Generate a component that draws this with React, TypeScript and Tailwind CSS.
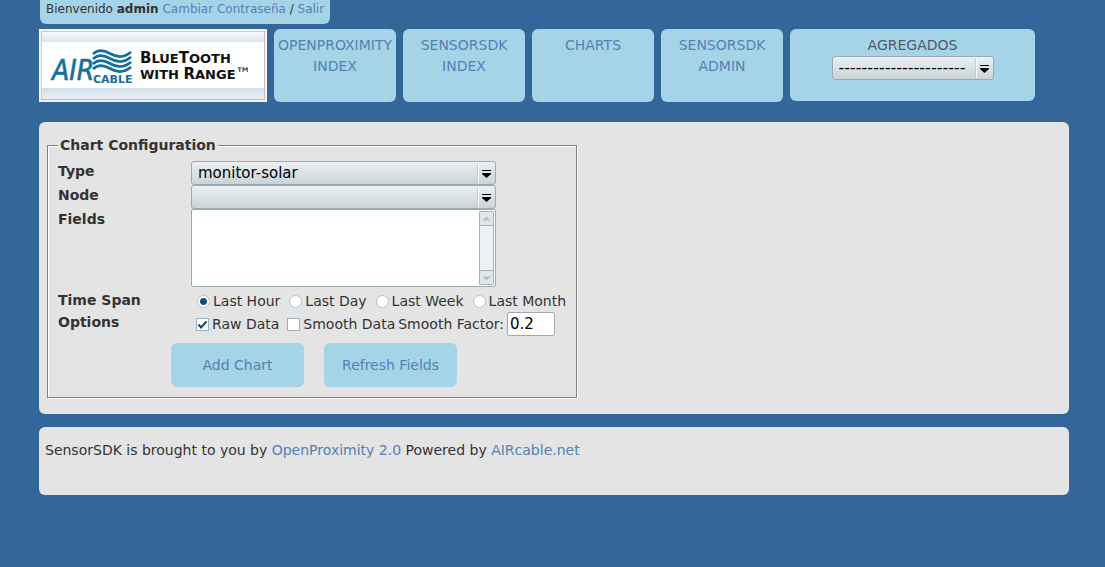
import { useState } from "react";
import type { ReactNode, SelectHTMLAttributes } from "react";

const NAV_ITEMS = [
  { label: "OPENPROXIMITY INDEX", href: "#openproximity" },
  { label: "SENSORSDK INDEX", href: "#sensorsdk" },
  { label: "CHARTS", href: "#charts" },
  { label: "SENSORSDK ADMIN", href: "#admin" },
];

const TIME_SPANS = ["Last Hour", "Last Day", "Last Week", "Last Month"];

function Logo() {
  return (
    <svg
      viewBox="0 0 228 73"
      className="block h-[73px] w-[228px]"
      role="img"
      aria-label="AIRcable, BlueTooth with Range"
    >
      <defs>
        <linearGradient id="bandTop" x1="0" y1="0" x2="0" y2="1">
          <stop offset="0" stopColor="#f8fafc" />
          <stop offset="1" stopColor="#d9e6f0" />
        </linearGradient>
        <linearGradient id="bandBottom" x1="0" y1="0" x2="0" y2="1">
          <stop offset="0" stopColor="#cfe0eb" />
          <stop offset="1" stopColor="#e9f0f5" />
        </linearGradient>
      </defs>
      <rect width="228" height="73" fill="#f4f4f4" />
      <rect x="2.5" y="2.5" width="223" height="68" fill="#fff" stroke="#d0cbc8" />
      <rect x="3" y="3" width="222" height="10" fill="url(#bandTop)" />
      <rect x="3" y="59" width="222" height="11" fill="url(#bandBottom)" />
      <path d="M3 70.5H225.500V3" fill="none" stroke="#c3bab5" />
      <text
        x="13"
        y="51"
        fill="#14709f"
        stroke="#14709f"
        strokeWidth=".6"
        fontSize="28"
        fontStyle="italic"
        fontFamily="'DejaVu Sans Condensed', sans-serif"
      >
        AIR
      </text>
      <g fill="none" stroke="#14709f" strokeWidth="2.7">
        <path d="M54 25C59 20 65 21 71 24.500S85 29 92 23" />
        <path d="M54 30C59 25 65 26 71 29.500S85 34 92 28" />
        <path d="M54 35C59 30 65 31 71 34.500S85 39 92 33" />
        <path d="M54 40C59 35 65 36 71 39.500S85 44 92 38" />
      </g>
      <text
        x="54"
        y="54"
        fill="#14709f"
        fontSize="11"
        fontWeight="bold"
        fontFamily="'DejaVu Sans', sans-serif"
      >
        CABLE
      </text>
      <g fill="#111" fontFamily="'DejaVu Sans', sans-serif" fontWeight="bold">
        <text x="101" y="34">
          <tspan fontSize="15">B</tspan>
          <tspan fontSize="13">LUE</tspan>
          <tspan fontSize="15">T</tspan>
          <tspan fontSize="13">OOTH</tspan>
        </text>
        <text x="101" y="50">
          <tspan fontSize="13">WITH </tspan>
          <tspan fontSize="15">R</tspan>
          <tspan fontSize="13">ANGE</tspan>
          <tspan fontSize="16" fontWeight="normal">
            ™
          </tspan>
        </text>
      </g>
    </svg>
  );
}

function Dropdown({
  className,
  children,
  ...props
}: SelectHTMLAttributes<HTMLSelectElement> & { children?: ReactNode }) {
  return (
    <div className={`relative h-6 ${className ?? ""}`}>
      <select
        {...props}
        className="block h-6 w-full appearance-none rounded-[3px] border border-[#9aabb5] bg-linear-to-b from-[#edf1f3] to-[#c9d3d6] pr-5 pl-1.5 text-[15px] leading-5 text-black"
      >
        {children}
      </select>
      <svg
        viewBox="0 0 19 22"
        className="pointer-events-none absolute top-px right-0 h-[22px] w-[19px]"
        aria-hidden="true"
      >
        <path d="M1.500 1V21" stroke="#f7f9fa" />
        <path d="M.500 1V21" stroke="#c3ccd0" />
        <path d="M5 8h9v1H5zM5 11h9v1l-4.500 4L5 12z" />
      </svg>
    </div>
  );
}

function FieldLabel({ htmlFor, children }: { htmlFor: string; children: ReactNode }) {
  return (
    <label htmlFor={htmlFor} className="font-bold leading-5">
      {children}
    </label>
  );
}

function FieldsList() {
  return (
    <div className="relative h-[78px]">
      <select
        id="fields"
        multiple
        className="block h-full w-full appearance-none overflow-hidden rounded-[2px] border border-[#9aabb5] bg-white"
      />
      <svg
        viewBox="0 0 15 74"
        className="pointer-events-none absolute top-0.5 right-0.5 h-[74px] w-[15px]"
        aria-hidden="true"
      >
        <rect x=".5" y=".5" width="14" height="73" rx="1" fill="#edf1f7" stroke="#a3b1ba" />
        <rect x=".5" y=".5" width="14" height="14" rx="1" fill="#dfe6ea" stroke="#a3b1ba" />
        <rect x=".5" y="59.500" width="14" height="14" rx="1" fill="#dfe6ea" stroke="#a3b1ba" />
        <path d="M3.500 9.500l4-4 4 4zM3.500 65.500l4 4 4-4z" fill="#b4bdc2" />
      </svg>
    </div>
  );
}

function ActionButton({ children }: { children: ReactNode }) {
  return (
    <button
      type="button"
      className="h-11 w-[133px] rounded-md bg-[#a5d4e8] text-[#5580b5]"
    >
      {children}
    </button>
  );
}

function Checkbox({ id, label, defaultChecked }: { id: string; label: string; defaultChecked?: boolean }) {
  return (
    <label htmlFor={id} className="flex items-center gap-[3px]">
      <span className="relative size-[13px]">
        <input
          id={id}
          type="checkbox"
          defaultChecked={defaultChecked}
          className="peer block size-[13px] appearance-none border border-[#9fb0bd] bg-white"
        />
        <svg
          viewBox="0 0 13 13"
          className="pointer-events-none absolute inset-0 hidden size-[13px] peer-checked:block"
          aria-hidden="true"
        >
          <path d="M2.500 6.500L5 9.500L10.500 3.500" fill="none" stroke="#0c4672" strokeWidth="2" />
        </svg>
      </span>
      {label}
    </label>
  );
}

export default function App() {
  const [span, setSpan] = useState("Last Hour");

  return (
    <div className="min-h-screen bg-[#336699] pr-9 pb-6 pl-[39px] font-['DejaVu_Sans',sans-serif] text-sm text-[#333]">
      <div className="ml-px h-6 w-fit rounded-b-md bg-[#a5d4e8] px-1.5 text-xs leading-[18px]">
        Bienvenido <strong>admin</strong>{" "}
        <a href="#password" className="text-[#5580b5]">
          Cambiar Contraseña
        </a>{" "}
        /{" "}
        <a href="#logout" className="text-[#5580b5]">
          Salir
        </a>
      </div>

      <header className="mt-[5px] flex flex-wrap gap-[7px]">
        <a href="#home">
          <Logo />
        </a>
        <nav className="flex gap-[7px]">
          {NAV_ITEMS.map((item) => (
            <a
              key={item.label}
              href={item.href}
              className="h-[73px] w-[122px] rounded-md bg-[#a5d4e8] px-0.5 pt-1.5 text-center leading-[21px] text-[#5580b5]"
            >
              {item.label}
            </a>
          ))}
        </nav>
        <div className="flex h-[72px] w-[245px] flex-col items-center rounded-md bg-[#a5d4e8] pt-1.5">
          <label htmlFor="agregados" className="leading-[21px] text-[#4f5b63]">
            AGREGADOS
          </label>
          <Dropdown id="agregados" className="w-[162px] [&>select]:text-base">
            <option>----------------------</option>
          </Dropdown>
        </div>
      </header>

      <main className="mt-5 rounded-md bg-[#e4e4e4] px-2 pt-[13px] pb-4">
        <form>
          <fieldset className="w-[529px] max-w-full border border-[#808080] px-2.5 pb-2.5 shadow-[1px_1px_0_#fff,inset_1px_1px_0_#fff]">
            <legend className="bg-[#e4e4e4] px-0.5 font-bold leading-5">Chart Configuration</legend>
            <div className="mt-1.5 grid grid-cols-[133px_1fr] whitespace-nowrap">
              <FieldLabel htmlFor="type">Type</FieldLabel>
              <Dropdown id="type" className="w-[305px]">
                <option>monitor-solar</option>
              </Dropdown>

              <FieldLabel htmlFor="node">Node</FieldLabel>
              <Dropdown id="node" className="w-[305px]" />

              <FieldLabel htmlFor="fields">Fields</FieldLabel>
              <div className="w-[305px]">
                <FieldsList />
              </div>

              <span id="span-label" className="pt-[3px] font-bold leading-5">
                Time Span
              </span>
              <div
                role="radiogroup"
                aria-labelledby="span-label"
                className="flex items-center gap-[9px] pt-1 pb-px pl-1.5 leading-5"
              >
                {TIME_SPANS.map((name) => (
                  <label key={name} className="flex items-center gap-[3px]">
                    <input
                      type="radio"
                      name="span"
                      checked={span === name}
                      onChange={() => setSpan(name)}
                      className="size-[13px] appearance-none rounded-full border border-[#b3c0ca] bg-white checked:bg-[radial-gradient(circle,#0c4f82_0_3px,#fff_4px)]"
                    />
                    {name}
                  </label>
                ))}
              </div>

              <span className="font-bold leading-5">Options</span>
              <div className="flex h-6 items-center gap-2 pl-[5px]">
                <Checkbox id="raw" label="Raw Data" defaultChecked />
                <div className="flex items-center gap-[3px]">
                  <Checkbox id="smooth" label="Smooth Data" />
                  <label htmlFor="factor">Smooth Factor:</label>
                  <input
                    id="factor"
                    type="text"
                    defaultValue="0.2"
                    className="h-6 w-12 rounded-[2px] border border-[#9aabb5] bg-white px-0.5 text-[15px] text-black"
                  />
                </div>
              </div>
            </div>
            <div className="mt-[7px] ml-[113px] flex gap-5">
              <ActionButton>Add Chart</ActionButton>
              <ActionButton>Refresh Fields</ActionButton>
            </div>
          </fieldset>
        </form>
      </main>

      <footer className="mt-[13px] rounded-md bg-[#e4e4e4] px-1.5 pt-[13px] pb-[35px] leading-5">
        SensorSDK is brought to you by{" "}
        <a href="#openproximity" className="text-[#5580b5]">
          OpenProximity 2.0
        </a>{" "}
        Powered by{" "}
        <a href="#aircable" className="text-[#5580b5]">
          AIRcable.net
        </a>
      </footer>
    </div>
  );
}
